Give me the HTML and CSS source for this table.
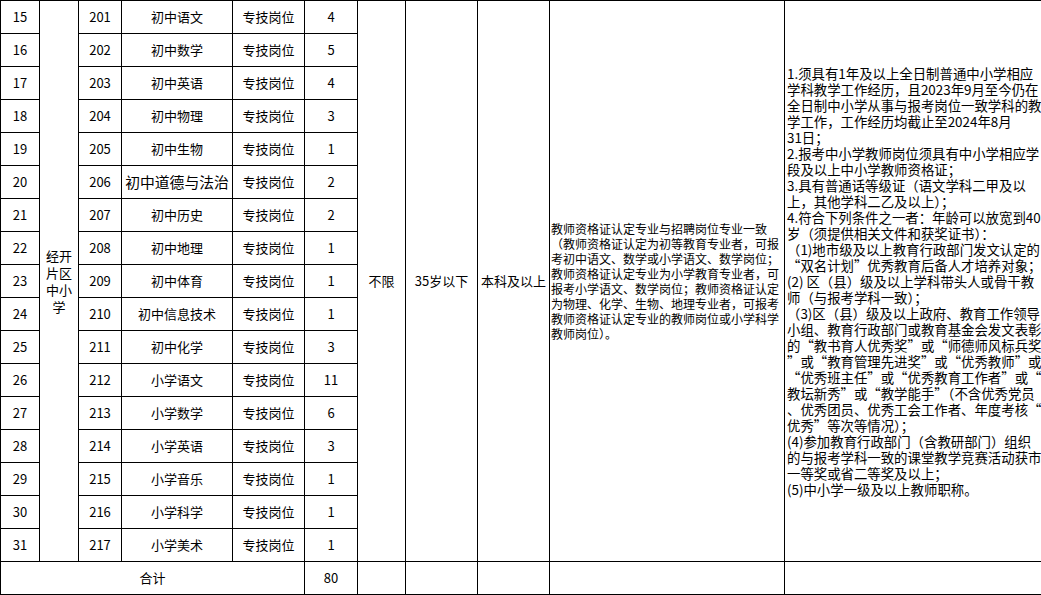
FILE: index.html
```html
<!DOCTYPE html>
<html lang="zh-CN">
<head>
<meta charset="utf-8">
<title>岗位表</title>
<link rel="stylesheet" href="styles.css">
</head>
<body>
<table class="grid">
  <colgroup>
    <col class="c-no"><col class="c-unit"><col class="c-code"><col class="c-name"><col class="c-type"><col class="c-num"><col class="c-a"><col class="c-b"><col class="c-c"><col class="c-major"><col class="c-other">
  </colgroup>
  <tbody>
    <tr>
      <td>15</td>
      <td class="unit" rowspan="17">经开<br>片区<br>中小<br>学</td>
      <td>201</td><td>初中语文</td><td>专技岗位</td><td>4</td>
      <td rowspan="17">不限</td>
      <td rowspan="17">35岁以下</td>
      <td rowspan="17">本科及以上</td>
      <td class="major" rowspan="17">教师资格证认定专业与招聘岗位专业一致<br>（教师资格证认定为初等教育专业者，可报<br>考初中语文、数学或小学语文、数学岗位；<br>教师资格证认定专业为小学教育专业者，可<br>报考小学语文、数学岗位；教师资格证认定<br>为物理、化学、生物、地理专业者，可报考<br>教师资格证认定专业的教师岗位或小学科学<br>教师岗位）。</td>
      <td class="other" rowspan="17">1.须具有1年及以上全日制普通中小学相应<br>学科教学工作经历，且2023年9月至今仍在<br>全日制中小学从事与报考岗位一致学科的教<br>学工作，工作经历均截止至2024年8月<br>31日；<br>2.报考中小学教师岗位须具有中小学相应学<br>段及以上中小学教师资格证；<br>3.具有普通话等级证（语文学科二甲及以<br>上，其他学科二乙及以上）；<br>4.符合下列条件之一者：年龄可以放宽到40<br>岁（须提供相关文件和获奖证书）：<br>（1)地市级及以上教育行政部门发文认定的<br>“双名计划”优秀教育后备人才培养对象；<br>(2) 区（县）级及以上学科带头人或骨干教<br>师（与报考学科一致）；<br>（3)区（县）级及以上政府、教育工作领导<br>小组、教育行政部门或教育基金会发文表彰<br>的“教书育人优秀奖”或“师德师风标兵奖<br>”或“教育管理先进奖”或“优秀教师”或<br>“优秀班主任”或“优秀教育工作者”或“<br>教坛新秀”或“教学能手”（不含优秀党员<br>、优秀团员、优秀工会工作者、年度考核“<br>优秀”等次等情况）；<br>(4)参加教育行政部门（含教研部门）组织<br>的与报考学科一致的课堂教学竞赛活动获市<br>一等奖或省二等奖及以上；<br>(5)中小学一级及以上教师职称。</td>
    </tr>
    <tr><td>16</td><td>202</td><td>初中数学</td><td>专技岗位</td><td>5</td></tr>
    <tr><td>17</td><td>203</td><td>初中英语</td><td>专技岗位</td><td>4</td></tr>
    <tr><td>18</td><td>204</td><td>初中物理</td><td>专技岗位</td><td>3</td></tr>
    <tr><td>19</td><td>205</td><td>初中生物</td><td>专技岗位</td><td>1</td></tr>
    <tr><td>20</td><td>206</td><td class="wide">初中道德与法治</td><td>专技岗位</td><td>2</td></tr>
    <tr><td>21</td><td>207</td><td>初中历史</td><td>专技岗位</td><td>2</td></tr>
    <tr><td>22</td><td>208</td><td>初中地理</td><td>专技岗位</td><td>1</td></tr>
    <tr><td>23</td><td>209</td><td>初中体育</td><td>专技岗位</td><td>1</td></tr>
    <tr><td>24</td><td>210</td><td>初中信息技术</td><td>专技岗位</td><td>1</td></tr>
    <tr><td>25</td><td>211</td><td>初中化学</td><td>专技岗位</td><td>3</td></tr>
    <tr><td>26</td><td>212</td><td>小学语文</td><td>专技岗位</td><td>11</td></tr>
    <tr><td>27</td><td>213</td><td>小学数学</td><td>专技岗位</td><td>6</td></tr>
    <tr><td>28</td><td>214</td><td>小学英语</td><td>专技岗位</td><td>3</td></tr>
    <tr><td>29</td><td>215</td><td>小学音乐</td><td>专技岗位</td><td>1</td></tr>
    <tr><td>30</td><td>216</td><td>小学科学</td><td>专技岗位</td><td>1</td></tr>
    <tr><td>31</td><td>217</td><td>小学美术</td><td>专技岗位</td><td>1</td></tr>
    <tr class="total">
      <td colspan="5">合计</td><td>80</td><td></td><td></td><td></td><td></td><td></td>
    </tr>
  </tbody>
</table>
</body>
</html>
```

FILE: styles.css
```css
html, body {
  margin: 0;
  padding: 0;
  background: #ffffff;
}

body {
  font-family: "Noto Sans CJK SC", "Noto Sans", sans-serif;
  color: #000000;
}

.grid {
  border-collapse: collapse;
  table-layout: fixed;
  width: 1041px;
}

.grid td {
  border: 1px solid #000000;
  height: 32px;
  padding: 0;
  text-align: center;
  vertical-align: middle;
  font-size: 13px;
  line-height: 16px;
  white-space: nowrap;
  overflow: hidden;
}

.c-no { width: 39px; }
.c-unit { width: 39px; }
.c-code { width: 43px; }
.c-name { width: 111px; }
.c-type { width: 72px; }
.c-num { width: 53px; }
.c-a { width: 48px; }
.c-b { width: 72px; }
.c-c { width: 72px; }
.c-major { width: 235px; }
.c-other { width: 257px; }

.grid td.unit {
  line-height: 17px;
}

.grid td.wide {
  font-size: 14.8px;
}

.grid td.major {
  text-align: left;
  font-size: 12px;
  line-height: 15px;
  padding-left: 1px;
}

.grid td.other {
  text-align: left;
  font-size: 13.4px;
  line-height: 16px;
  padding-left: 2px;
}
```
